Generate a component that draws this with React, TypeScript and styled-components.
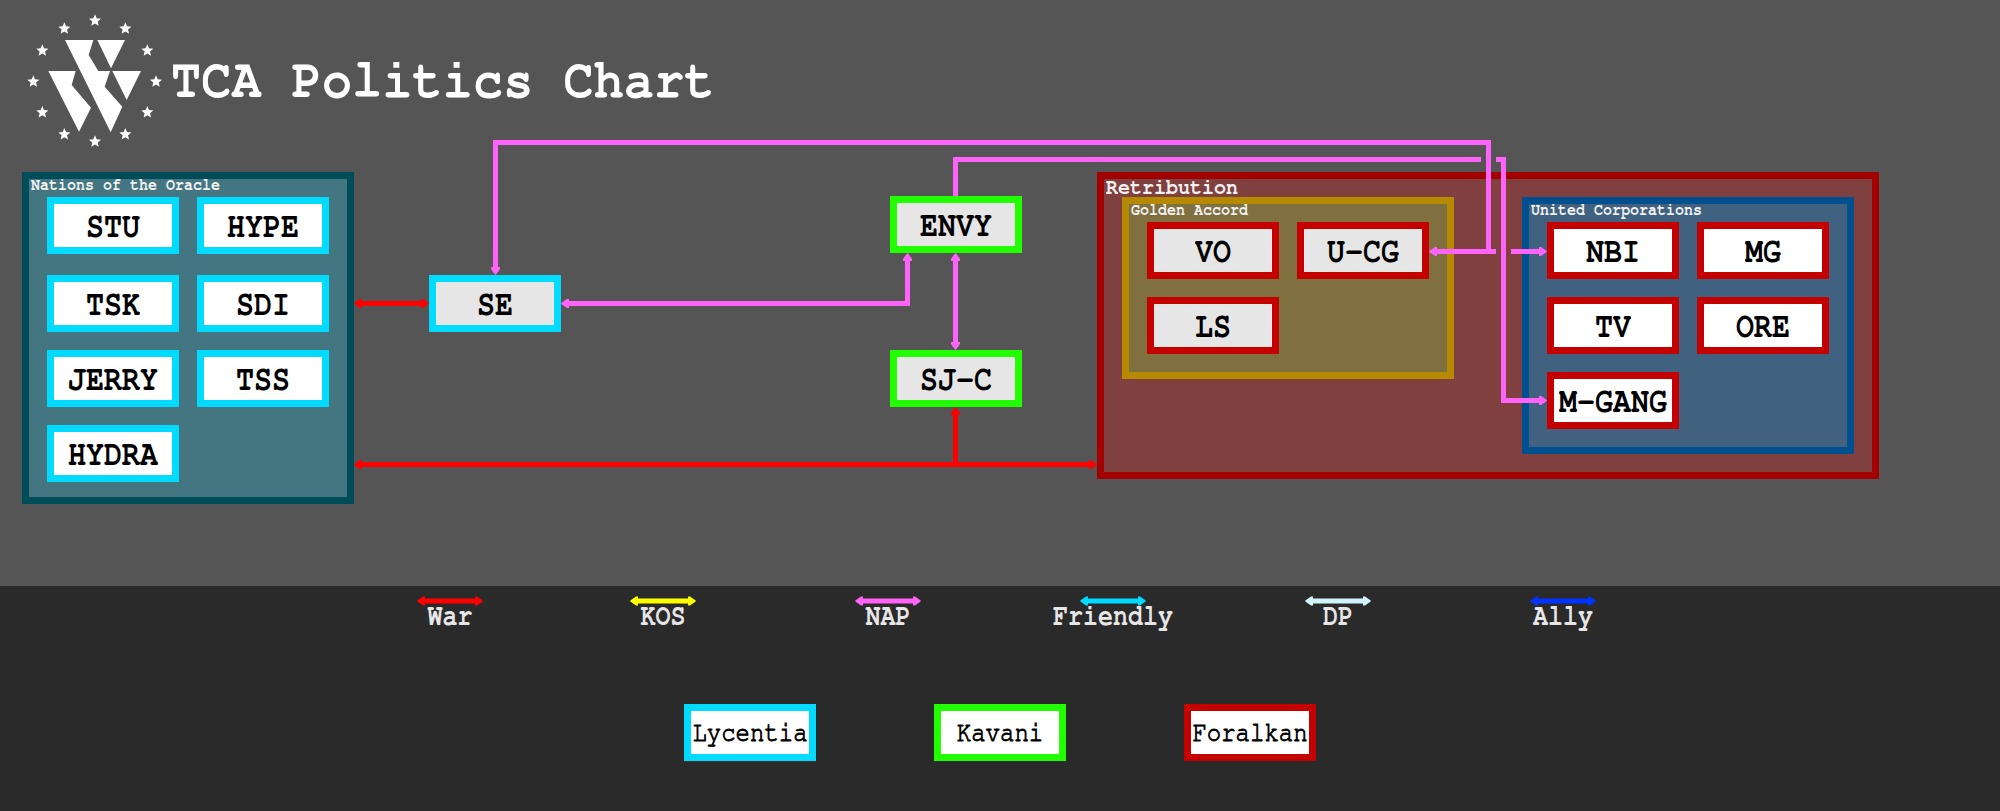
import styled, { createGlobalStyle } from 'styled-components';

const MONO = `FreeMono, "Liberation Mono", "Courier New", monospace`;

const Global = createGlobalStyle`
	html, body {
		margin: 0;
		padding: 0;
		background: #555555;
		overflow: hidden;
	}
`;

const Page = styled.div`
	width: 2000px;
	height: 811px;
	display: flex;
	flex-direction: column;
	font-family: ${MONO};
`;

const Chart = styled.div`
	position: relative;
	height: 586px;
	background: #555555;
`;

const Header = styled.header`
	display: flex;
	align-items: center;
	padding: 5px 0 0 10px;
	height: 155px;
	box-sizing: border-box;
`;

const Title = styled.h1`
	margin: 0 0 0 1px;
	font-size: 50px;
	line-height: 60px;
	font-weight: 700;
	letter-spacing: 0.2px;
	color: #ffffff;
	white-space: pre;
	transform: scaleY(1.1);
`;

// the chart's lettering is taller than the mono face, so it gets stretched a little
const Tall = styled.span<{ $by?: number }>`
	display: inline-block;
	transform: scaleY(${(p) => p.$by || 1.2});
`;

const Group = styled.section<{ $x: number; $y: number; $w: number; $h: number; $border: string; $fill: string }>`
	position: absolute;
	left: ${(p) => p.$x}px;
	top: ${(p) => p.$y}px;
	width: ${(p) => p.$w}px;
	height: ${(p) => p.$h}px;
	box-sizing: border-box;
	border: 7px solid ${(p) => p.$border};
	background: ${(p) => p.$fill};
`;

const Nested = styled.section<{ $w: number; $h: number; $border: string; $fill: string }>`
	flex: none;
	width: ${(p) => p.$w}px;
	height: ${(p) => p.$h}px;
	box-sizing: border-box;
	border: 7px solid ${(p) => p.$border};
	background: ${(p) => p.$fill};
`;

const GroupTitle = styled.div<{ $big?: boolean }>`
	height: 18px;
	line-height: ${(p) => (p.$big ? 16 : 14)}px;
	padding-left: 2px;
	font-size: ${(p) => (p.$big ? 20 : 15)}px;
	font-weight: 700;
	color: #f2f2f2;
	white-space: pre;
`;

const Nodes = styled.div<{ $rows?: string }>`
	display: grid;
	grid-template-columns: 132px 132px;
	grid-template-rows: ${(p) => p.$rows || 'none'};
	gap: 18px;
	padding-left: 18px;
	align-items: start;
`;

const Node = styled.div<{ $edge: string; $muted?: boolean }>`
	width: 132px;
	height: 57px;
	box-sizing: border-box;
	border: 7px solid ${(p) => p.$edge};
	background: ${(p) => (p.$muted ? '#e6e6e6' : '#ffffff')};
	color: #000000;
	display: flex;
	align-items: center;
	justify-content: center;
	font-size: 30px;
	font-weight: 700;
`;

const FreeNode = styled(Node)<{ $x: number; $y: number }>`
	position: absolute;
	left: ${(p) => p.$x}px;
	top: ${(p) => p.$y}px;
`;

const RetributionBody = styled.div`
	display: flex;
	gap: 68px;
	padding-left: 18px;
`;

const Wires = styled.svg`
	position: absolute;
	left: 0;
	top: 0;
	pointer-events: none;
`;

const Legend = styled.footer`
	flex: 1;
	background: #2a2a2a;
	padding-top: 10px;
`;

const Keys = styled.div`
	display: grid;
	grid-template-columns: 213px repeat(4, 225px) 66px;
	padding-left: 417px;
`;

const Key = styled.div`
	width: 66px;
	display: flex;
	flex-direction: column;
	align-items: center;
`;

const KeyLabel = styled.span`
	font-size: 25px;
	line-height: 22px;
	font-weight: 700;
	color: #e6e6e6;
	white-space: nowrap;
`;

const Swatches = styled.div`
	display: flex;
	gap: 118px;
	margin-top: 76px;
	padding-left: 684px;
`;

const Swatch = styled(Node)`
	font-size: 24px;
	font-weight: 400;
	-webkit-text-stroke: 0.8px #000000;
`;

const CYAN = '#00dbff';
const GREEN = '#22ff00';
const CRIMSON = '#c40000';
const PINK = '#ff63f9';
const RED = '#ff0000';

type Dir = 'l' | 'r' | 'u' | 'd';

// tip of the arrow at x,y, with a short square shoulder at the back
const head = (x: number, y: number, d: Dir) => {
	const shape: [number, number][] = [[0, 0], [1, 1], [6, 4.5], [8, 4.5], [8, -4.5], [6, -4.5], [1, -1]];
	const pts = shape.map(([along, across]) => {
		if (d === 'l') return `${x + along},${y + across}`;
		if (d === 'r') return `${x - along},${y + across}`;
		if (d === 'u') return `${x + across},${y + along}`;
		return `${x + across},${y - along}`;
	});
	return pts.join(' ');
};

const pinkLines = [
	'495.5,268 495.5,142.5 1488.5,142.5 1488.5,251.5',
	'1496,251.5 1434,251.5',
	'955.5,196 955.5,159.5 1481,159.5',
	'1496,159.5 1503.5,159.5 1503.5,400.5 1540,400.5',
	'1511,251.5 1540,251.5',
	'568,303.5 907.5,303.5 907.5,260',
	'955.5,260 955.5,343',
];

const pinkHeads: [number, number, Dir][] = [
	[495.5, 275, 'd'],
	[1429, 251.5, 'l'],
	[1547, 400.5, 'r'],
	[1547, 251.5, 'r'],
	[561, 303.5, 'l'],
	[907.5, 253, 'u'],
	[955.5, 253, 'u'],
	[955.5, 350, 'd'],
];

const redLines = [
	'360,303.5 423,303.5',
	'360,464.5 1091,464.5',
	'955.5,464.5 955.5,414',
];

const redHeads: [number, number, Dir][] = [
	[354, 303.5, 'l'],
	[429, 303.5, 'r'],
	[354, 464.5, 'l'],
	[1097, 464.5, 'r'],
	[955.5, 407, 'u'],
];

const Connectors = () => (
	<Wires width={2000} height={586}>
		<g fill='none' strokeWidth={5}>
			{redLines.map((p) => (
				<polyline key={p} points={p} stroke={RED} />
			))}
			{pinkLines.map((p) => (
				<polyline key={p} points={p} stroke={PINK} />
			))}
		</g>
		{redHeads.map(([x, y, d]) => (
			<polygon key={`r${x}${y}${d}`} points={head(x, y, d)} fill={RED} />
		))}
		{pinkHeads.map(([x, y, d]) => (
			<polygon key={`p${x}${y}${d}`} points={head(x, y, d)} fill={PINK} />
		))}
	</Wires>
);

const KeyArrow = ({ color }: { color: string }) => (
	<svg width={66} height={10} viewBox='0 0 66 10'>
		<rect x={7} y={2.5} width={52} height={5} fill={color} />
		<polygon points={head(0, 5, 'l')} fill={color} />
		<polygon points={head(66, 5, 'r')} fill={color} />
	</svg>
);

const stars: [number, number][] = [
	[255, 47], [346, 71], [412, 137], [438, 230], [412, 322], [346, 388],
	[255, 410], [163, 388], [97, 322], [70, 230], [97, 137], [163, 71],
];

const starPoints = (cx: number, cy: number) => {
	const pts: string[] = [];
	for (let i = 0; i < 10; i++) {
		const r = i % 2 === 0 ? 19 : 8.5;
		const a = (Math.PI / 5) * i - Math.PI / 2;
		pts.push(`${cx + r * Math.cos(a)},${cy + r * Math.sin(a)}`);
	}
	return pts.join(' ');
};

const Logo = () => (
	<svg width={160} height={150} viewBox='0 0 480 450' style={{ flex: 'none' }}>
		<g fill='#ffffff'>
			{stars.map(([x, y]) => (
				<polygon key={`${x}-${y}`} points={starPoints(x, y)} />
			))}
			<polygon points='165,105 250,105 236,150 265,198 300,198 284,245 337,305 302,382' />
			<polygon points='262,105 345,105 303,190' />
			<polygon points='307,198 393,198 350,285' />
			<polygon points='115,198 197,198 185,240 243,308 207,380' />
		</g>
	</svg>
);

const oracle = ['STU', 'HYPE', 'TSK', 'SDI', 'JERRY', 'TSS', 'HYDRA'];
const golden = ['VO', 'U-CG', 'LS'];
const united = ['NBI', 'MG', 'TV', 'ORE', 'M-GANG'];

const keys = [
	{ label: 'War', color: RED },
	{ label: 'KOS', color: '#ffff00' },
	{ label: 'NAP', color: PINK },
	{ label: 'Friendly', color: CYAN },
	{ label: 'DP', color: '#d0f5ff' },
	{ label: 'Ally', color: '#0033ff' },
];

const swatches = [
	{ label: 'Lycentia', edge: CYAN },
	{ label: 'Kavani', edge: GREEN },
	{ label: 'Foralkan', edge: CRIMSON },
];

export default function App() {
	return (
		<Page>
			<Global />
			<Chart>
				<Header>
					<Logo />
					<Title>TCA Politics Chart</Title>
				</Header>

				<Group $x={22} $y={172} $w={332} $h={332} $border='#004d5a' $fill='#437680'>
					<GroupTitle><Tall $by={1.1}>Nations of the Oracle</Tall></GroupTitle>
					<Nodes $rows='60px 57px 57px 57px'>
						{oracle.map((n) => (
							<Node key={n} $edge={CYAN}><Tall>{n}</Tall></Node>
						))}
					</Nodes>
				</Group>

				<FreeNode $x={429} $y={275} $edge={CYAN} $muted><Tall>SE</Tall></FreeNode>
				<FreeNode $x={890} $y={196} $edge={GREEN} $muted><Tall>ENVY</Tall></FreeNode>
				<FreeNode $x={890} $y={350} $edge={GREEN} $muted><Tall>SJ-C</Tall></FreeNode>

				<Group $x={1097} $y={172} $w={782} $h={307} $border='#a30000' $fill='#804040'>
					<GroupTitle $big><Tall $by={1.1}>Retribution</Tall></GroupTitle>
					<RetributionBody>
						<Nested $w={332} $h={182} $border='#b58900' $fill='#807040'>
							<GroupTitle><Tall $by={1.1}>Golden Accord</Tall></GroupTitle>
							<Nodes>
								{golden.map((n) => (
									<Node key={n} $edge={CRIMSON} $muted><Tall>{n}</Tall></Node>
								))}
							</Nodes>
						</Nested>
						<Nested $w={332} $h={257} $border='#00508f' $fill='#406280'>
							<GroupTitle><Tall $by={1.1}>United Corporations</Tall></GroupTitle>
							<Nodes>
								{united.map((n) => (
									<Node key={n} $edge={CRIMSON}><Tall>{n}</Tall></Node>
								))}
							</Nodes>
						</Nested>
					</RetributionBody>
				</Group>

				<Connectors />
			</Chart>

			<Legend>
				<Keys>
					{keys.map((k) => (
						<Key key={k.label}>
							<KeyArrow color={k.color} />
							<KeyLabel><Tall>{k.label}</Tall></KeyLabel>
						</Key>
					))}
				</Keys>
				<Swatches>
					{swatches.map((s) => (
						<Swatch key={s.label} $edge={s.edge}><Tall $by={1.15}>{s.label}</Tall></Swatch>
					))}
				</Swatches>
			</Legend>
		</Page>
	);
}
